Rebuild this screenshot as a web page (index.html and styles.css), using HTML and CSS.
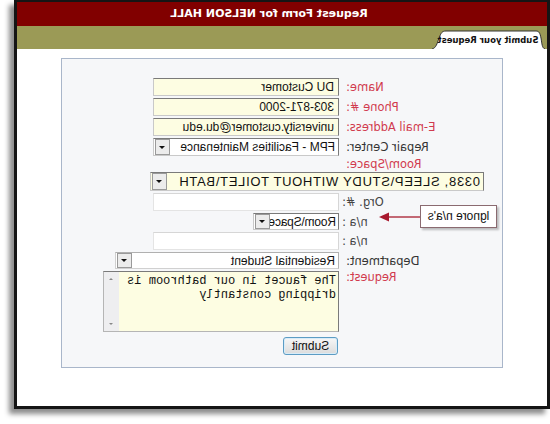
FILE: index.html
```html
<!DOCTYPE html>
<html>
<head>
<meta charset="utf-8">
<link rel="stylesheet" href="styles.css">
</head>
<body>
<div class="page">
  <div class="frame">
    <div class="titlebar">Request Form for NELSON HALL</div>
    <div class="tabbar">
      <div class="tab">
        <svg class="tab-shape" width="114" height="19" viewBox="0 0 114 19"><path d="M0 19 C3 18 3 14 4 8 C5 3 6 1 9 1 L99 1 C103 1 104 3 106 8 C108 14 109 18 113 19 Z" fill="#fff" stroke="none"/><path d="M0 19 C3 18 3 14 4 8 C5 3 6 1 9 1 L99 1 C103 1 104 3 106 8 C108 14 109 18 113 19" fill="none" stroke="#333" stroke-width="1"/></svg>
        <span class="tab-label">Submit your Request</span>
      </div>
    </div>
    <div class="content">
      <div class="panel">
        <div class="form">
          <label class="lbl req">Name:</label>
          <input class="field yellow w186" type="text" value="DU Customer">

          <label class="lbl req">Phone #:</label>
          <input class="field yellow w186" type="text" value="303-871-2000">

          <label class="lbl req">E-mail Address:</label>
          <input class="field yellow w186" type="text" value="university.customer@du.edu">

          <label class="lbl">Repair Center:</label>
          <div class="select w186"><span class="sel-text">FPM - Facilities Maintenance</span><span class="sel-btn"><span class="tri"></span></span></div>

          <label class="lbl req short">Room/Space:</label>
          <div></div>

          <div class="select yellow room"><span class="sel-text">0338, SLEEP\STUDY WITHOUT TOILET\BATH</span><span class="sel-btn"><span class="tri"></span></span></div>

          <label class="lbl dim wide">Org. #:</label>
          <input class="field plain w186" type="text" value="">

          <label class="lbl dim wide">n/a :</label>
          <div class="select w86 small"><span class="sel-text">Room\Space</span><span class="sel-btn"><span class="tri"></span></span></div>

          <label class="lbl dim wide">n/a :</label>
          <input class="field plain w186" type="text" value="">

          <label class="lbl">Department:</label>
          <div class="select w224 dept"><span class="sel-text">Residential Student</span><span class="sel-btn"><span class="tri"></span></span></div>

          <label class="lbl req top">Request:</label>
          <div class="ta-wrap">
            <textarea class="ta">The faucet in our bathroom is dripping constantly</textarea>
            <div class="scroll"><span class="up"></span><span class="down"></span></div>
          </div>

          <div></div>
          <div class="btn-row"><button class="submit" type="button">Submit</button></div>
        </div>

        <div class="callout">lgnore n/a's</div>
        <svg class="arrow" width="42" height="12" viewBox="0 0 42 12"><line x1="0" y1="6" x2="32" y2="6" stroke="#b23a48" stroke-width="1.5"/><path d="M31 1.5 L41 6 L31 10.5 Z" fill="#a8192e"/></svg>
      </div>
    </div>
  </div>
</div>
</body>
</html>
```

FILE: styles.css
```css
html, body {
  margin: 0;
  padding: 0;
  background: #ffffff;
}

.page {
  width: 550px;
  height: 424px;
  overflow: hidden;
  transform: scaleX(-1);
  font-family: "DejaVu Sans", Verdana, sans-serif;
}

.frame {
  box-sizing: border-box;
  width: 536px;
  height: 409px;
  border: 3px solid #151515;
  border-top-width: 2px;
  background: #ffffff;
  box-shadow: 5px 5px 5px rgba(0, 0, 0, 0.45);
  display: flex;
  flex-direction: column;
}

.titlebar {
  height: 24px;
  background: #810000;
  color: #ffffff;
  font-weight: bold;
  font-size: 11px;
  line-height: 24px;
  text-align: center;
  padding-left: 26px;
}

.tabbar {
  height: 23px;
  background: #9b9a56;
  display: flex;
  align-items: flex-end;
}

.tab {
  position: relative;
  margin-left: 2px;
  width: 114px;
  height: 19px;
  display: flex;
  align-items: center;
  justify-content: center;
}

.tab-shape {
  position: absolute;
  left: 0;
  top: 0;
}

.tab-label {
  position: relative;
  font-size: 8.5px;
  font-weight: bold;
  color: #111;
  padding-top: 1px;
  white-space: nowrap;
}

.content {
  flex: 1;
  padding-top: 9px;
  padding-left: 44px;
}

.panel {
  position: relative;
  box-sizing: border-box;
  width: 442px;
  height: 310px;
  border: 1px solid #a9b6ca;
  background: #f6f7f9;
  padding-top: 19px;
}

.form {
  display: grid;
  grid-template-columns: 156px 1fr;
  column-gap: 7px;
  row-gap: 2px;
}

.lbl {
  font-size: 11.5px;
  color: #333333;
  text-align: right;
  align-self: center;
  line-height: 14px;
  white-space: nowrap;
}

.lbl.req {
  color: #d13a4e;
}

.lbl.dim {
  color: #444444;
}

.lbl.wide {
  margin-right: -4px;
}

.lbl.short {
  line-height: 12px;
  height: 12px;
}

.lbl.top {
  align-self: start;
  margin-top: -1px;
}

.field {
  box-sizing: border-box;
  height: 18px;
  margin: 0;
  padding: 0 4px;
  font-family: "Liberation Sans", Arial, sans-serif;
  font-size: 12px;
  color: #111;
  border: 1px solid;
  border-color: #7a7a7a #c9c9c9 #c9c9c9 #7a7a7a;
  outline: none;
}

.yellow {
  background: #fdfde2;
}

.plain {
  background: #ffffff;
  border-color: #d6d6d6 #e4e4e4 #e4e4e4 #d6d6d6;
}

.w186 { width: 186px; }
.w86 { width: 86px; }
.w224 { width: 224px; }

.select {
  box-sizing: border-box;
  height: 18px;
  display: flex;
  align-items: center;
  border: 1px solid;
  border-color: #7a7a7a #c9c9c9 #c9c9c9 #7a7a7a;
  background: #ffffff;
  font-family: "Liberation Sans", Arial, sans-serif;
  font-size: 12px;
  color: #111;
}

.select.yellow {
  background: #fdfde2;
}

.select.small {
  height: 17px;
}

.select.small .sel-text {
  padding-left: 2px;
  letter-spacing: -0.2px;
}

.select.dept {
  height: 17px;
  border-color: #b0b0b0 #d0d0d0 #d0d0d0 #b0b0b0;
}

.room {
  grid-column: 1 / span 2;
  margin-left: 18px;
  width: 334px;
  height: 19px;
  font-size: 13px;
  letter-spacing: 0.7px;
}

.sel-text {
  flex: 1;
  padding-left: 3px;
  white-space: nowrap;
  overflow: hidden;
}

.sel-btn {
  box-sizing: border-box;
  flex: none;
  width: 15px;
  height: 100%;
  margin-right: 1px;
  border: 1px solid #9a9a9a;
  background: #ececec;
  display: flex;
  align-items: center;
  justify-content: center;
}

.tri {
  width: 0;
  height: 0;
  border-left: 3px solid transparent;
  border-right: 3px solid transparent;
  border-top: 3px solid #111;
}

.ta-wrap {
  box-sizing: border-box;
  width: 236px;
  height: 61px;
  display: flex;
  border: 1px solid;
  border-color: #7a7a7a #b5b5b5 #b5b5b5 #7a7a7a;
  background: #fdfde2;
}

.ta {
  flex: 1;
  margin: 0;
  border: none;
  outline: none;
  resize: none;
  background: transparent;
  font-family: "Liberation Mono", "Courier New", monospace;
  font-size: 12px;
  line-height: 14px;
  color: #111;
  padding: 2px 2px 0 2px;
  overflow: hidden;
}

.scroll {
  width: 15px;
  background: #eeeef0;
  display: flex;
  flex-direction: column;
  justify-content: space-between;
  align-items: center;
  padding: 6px 0;
  box-sizing: border-box;
}

.up {
  width: 0;
  height: 0;
  border-left: 2px solid transparent;
  border-right: 2px solid transparent;
  border-bottom: 2px solid #888;
}

.down {
  width: 0;
  height: 0;
  border-left: 2px solid transparent;
  border-right: 2px solid transparent;
  border-top: 2px solid #888;
}

.btn-row {
  padding-top: 1px;
}

.submit {
  box-sizing: border-box;
  width: 55px;
  height: 18px;
  margin: 0 0 0 1px;
  padding: 0;
  border: 1px solid #5c9cc4;
  border-radius: 3px;
  background: linear-gradient(#f7f7f7, #dcdcdc);
  box-shadow: inset 0 0 0 1px #d8ecf8;
  font-family: "Liberation Sans", Arial, sans-serif;
  font-size: 12px;
  color: #111;
}

.callout {
  position: absolute;
  left: 5px;
  top: 146px;
  box-sizing: border-box;
  width: 77px;
  height: 23px;
  border: 1px solid #8a6a70;
  background: #ffffff;
  box-shadow: -2px 2px 2px rgba(0, 0, 0, 0.25);
  font-family: "Liberation Sans", Arial, sans-serif;
  font-size: 12px;
  color: #111;
  line-height: 21px;
  text-align: center;
}

.arrow {
  position: absolute;
  left: 82px;
  top: 152px;
}
```
